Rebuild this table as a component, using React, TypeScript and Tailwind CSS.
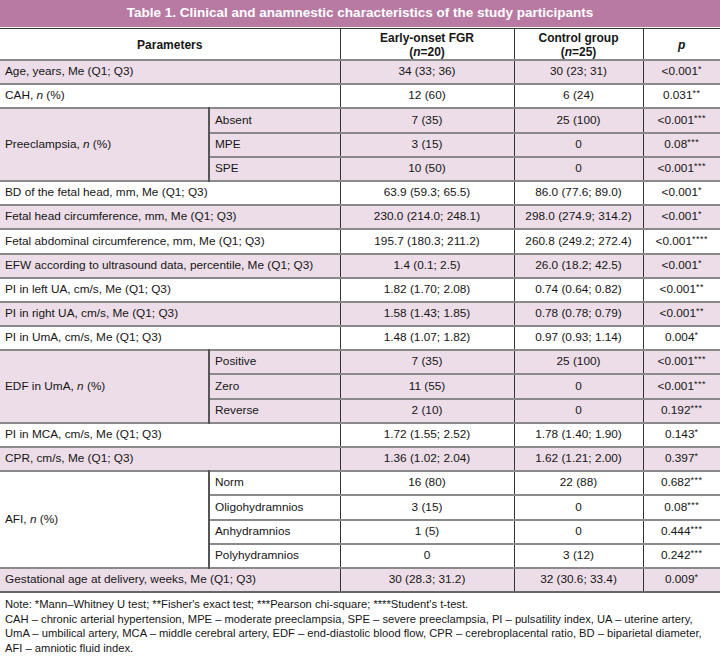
import React from "react";

type Row = {
  param?: React.ReactNode;
  span?: number;
  sub?: string;
  a: string;
  b: string;
  p: string;
  stars: string;
  pink: boolean;
};

const N = () => <i>n</i>;

const rows: Row[] = [
  { param: "Age, years, Me (Q1; Q3)", a: "34 (33; 36)", b: "30 (23; 31)", p: "<0.001", stars: "*", pink: true },
  { param: <>CAH, <N /> (%)</>, a: "12 (60)", b: "6 (24)", p: "0.031", stars: "**", pink: false },
  { param: <>Preeclampsia, <N /> (%)</>, span: 3, sub: "Absent", a: "7 (35)", b: "25 (100)", p: "<0.001", stars: "***", pink: true },
  { sub: "MPE", a: "3 (15)", b: "0", p: "0.08", stars: "***", pink: true },
  { sub: "SPE", a: "10 (50)", b: "0", p: "<0.001", stars: "***", pink: true },
  { param: "BD of the fetal head, mm, Me (Q1; Q3)", a: "63.9 (59.3; 65.5)", b: "86.0 (77.6; 89.0)", p: "<0.001", stars: "*", pink: false },
  { param: "Fetal head circumference, mm, Me (Q1; Q3)", a: "230.0 (214.0; 248.1)", b: "298.0 (274.9; 314.2)", p: "<0.001", stars: "*", pink: true },
  { param: "Fetal abdominal circumference, mm, Me (Q1; Q3)", a: "195.7 (180.3; 211.2)", b: "260.8 (249.2; 272.4)", p: "<0.001", stars: "****", pink: false },
  { param: "EFW according to ultrasound data, percentile, Me (Q1; Q3)", a: "1.4 (0.1; 2.5)", b: "26.0 (18.2; 42.5)", p: "<0.001", stars: "*", pink: true },
  { param: "PI in left UA, cm/s, Me (Q1; Q3)", a: "1.82 (1.70; 2.08)", b: "0.74 (0.64; 0.82)", p: "<0.001", stars: "**", pink: false },
  { param: "PI in right UA, cm/s, Me (Q1; Q3)", a: "1.58 (1.43; 1.85)", b: "0.78 (0.78; 0.79)", p: "<0.001", stars: "**", pink: true },
  { param: "PI in UmA, cm/s, Me (Q1; Q3)", a: "1.48 (1.07; 1.82)", b: "0.97 (0.93; 1.14)", p: "0.004", stars: "*", pink: false },
  { param: <>EDF in UmA, <N /> (%)</>, span: 3, sub: "Positive", a: "7 (35)", b: "25 (100)", p: "<0.001", stars: "***", pink: true },
  { sub: "Zero", a: "11 (55)", b: "0", p: "<0.001", stars: "***", pink: true },
  { sub: "Reverse", a: "2 (10)", b: "0", p: "0.192", stars: "***", pink: true },
  { param: "PI in MCA, cm/s, Me (Q1; Q3)", a: "1.72 (1.55; 2.52)", b: "1.78 (1.40; 1.90)", p: "0.143", stars: "*", pink: false },
  { param: "CPR, cm/s, Me (Q1; Q3)", a: "1.36 (1.02; 2.04)", b: "1.62 (1.21; 2.00)", p: "0.397", stars: "*", pink: true },
  { param: <>AFI, <N /> (%)</>, span: 4, sub: "Norm", a: "16 (80)", b: "22 (88)", p: "0.682", stars: "***", pink: false },
  { sub: "Oligohydramnios", a: "3 (15)", b: "0", p: "0.08", stars: "***", pink: false },
  { sub: "Anhydramnios", a: "1 (5)", b: "0", p: "0.444", stars: "***", pink: false },
  { sub: "Polyhydramnios", a: "0", b: "3 (12)", p: "0.242", stars: "***", pink: false },
  { param: "Gestational age at delivery, weeks, Me (Q1; Q3)", a: "30 (28.3; 31.2)", b: "32 (30.6; 33.4)", p: "0.009", stars: "*", pink: true },
];

const Stars = ({ s }: { s: string }) => (
  <span className="relative -top-[3px] text-[9px] tracking-[0.5px]">{s}</span>
);

export default function App() {
  return (
    <div className="w-[720px] bg-white text-[#161616] font-['Liberation_Sans',Arial,sans-serif]">
      <div className="h-[27px] bg-[#b87aa3] flex items-center justify-center text-white font-bold text-[13.5px]">
        Table 1. Clinical and anamnestic characteristics of the study participants
      </div>
      <table className="w-full border-collapse mt-[1px] text-[11.8px] leading-none">
        <colgroup>
          <col className="w-[209px]" />
          <col className="w-[131px]" />
          <col className="w-[174px]" />
          <col className="w-[129px]" />
          <col className="w-[77px]" />
        </colgroup>
        <thead>
          <tr className="h-[29px] border-t border-[#333] border-b-2 border-b-[#8a8a8a] font-bold text-[12px]">
            <th colSpan={2} className="border-r border-[#333] leading-[14px] pt-[2px]">Parameters</th>
            <th className="border-r border-[#333] leading-[14px] pt-[2px]">
              Early-onset FGR
              <br />(<i>n</i>=20)
            </th>
            <th className="border-r border-[#333] leading-[14px] pt-[2px]">
              Control group
              <br />(<i>n</i>=25)
            </th>
            <th className="leading-[14px] pt-[2px]">
              <i>p</i>
            </th>
          </tr>
        </thead>
        <tbody>
          {rows.map((r, i) => {
            const bg = r.pink ? "bg-[#ecdde8]" : "bg-white";
            const last = i === rows.length - 1;
            return (
              <tr
                key={i}
                className={`h-[24.2px] ${bg} ${last ? "border-b-2 border-b-[#666]" : "border-b-2 border-b-[#8a8a8a]"}`}
              >
                {r.param !== undefined && (
                  <td
                    rowSpan={r.span ?? 1}
                    colSpan={r.sub ? 1 : 2}
                    className={`pl-[5px] text-left ${r.sub ? "border-r-2 border-r-[#555]" : ""} ${r.span ? bg : ""}`}
                  >
                    {r.param}
                  </td>
                )}
                {r.sub && <td className="pl-[5px] text-left border-l-2 border-l-[#555] border-r border-r-[#333]">{r.sub}</td>}
                <td className={`text-center border-r border-[#333] ${!r.sub ? "border-l border-l-[#333]" : ""}`}>{r.a}</td>
                <td className="text-center border-r border-[#333]">{r.b}</td>
                <td className="text-center">
                  {r.p}
                  <Stars s={r.stars} />
                </td>
              </tr>
            );
          })}
        </tbody>
      </table>
      <div className="pt-[4px] pl-[5px] text-[11.2px] leading-[14.5px] text-[#161616] whitespace-nowrap">
        <div>Note: *Mann–Whitney U test; **Fisher's exact test; ***Pearson chi-square; ****Student's t-test.</div>
        <div>
          CAH – chronic arterial hypertension, MPE – moderate preeclampsia, SPE – severe preeclampsia, PI – pulsatility index, UA – uterine artery,
        </div>
        <div>
          UmA – umbilical artery, MCA – middle cerebral artery, EDF – end-diastolic blood flow, CPR – cerebroplacental ratio, BD – biparietal diameter,
        </div>
        <div>AFI – amniotic fluid index.</div>
      </div>
    </div>
  );
}
